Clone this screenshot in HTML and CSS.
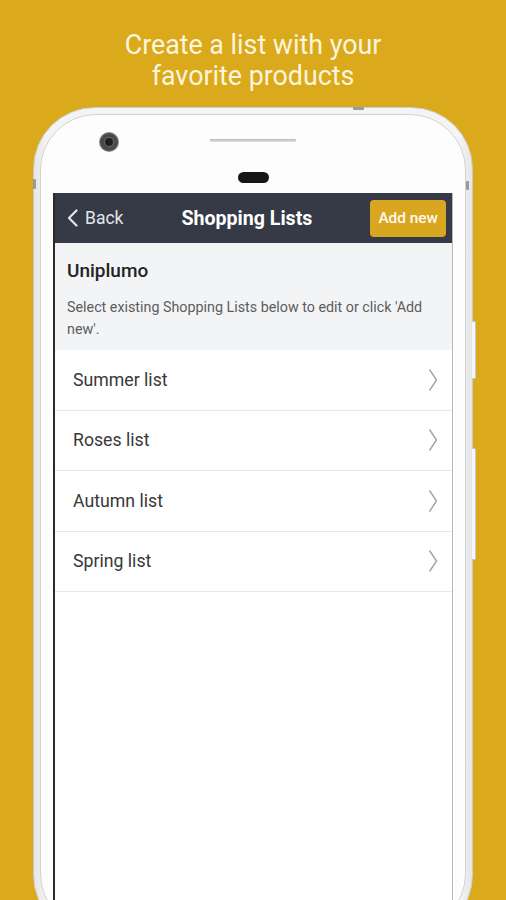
FILE: index.html
```html
<!DOCTYPE html>
<html>
<head>
<meta charset="utf-8">
<link rel="stylesheet" href="styles.css">
</head>
<body>
<div class="page">
  <h1 class="headline">Create a list with your<br>favorite products</h1>
  <div class="phone">
    <span class="mark mark-top"></span>
    <span class="mark mark-left"></span>
    <span class="mark mark-right"></span>
    <span class="side-btn side-btn-1"></span>
    <span class="side-btn side-btn-2"></span>
    <div class="phone-body">
      <div class="bezel">
        <div class="bezel-row">
          <span class="camera"><span class="lens"></span></span>
          <span class="speaker"></span>
        </div>
        <span class="earpiece"></span>
      </div>
      <div class="screen">
        <header class="navbar">
          <a class="back">
            <svg class="back-icon" width="11" height="18" viewBox="0 0 11 18"><polyline points="9.5,1.5 2,9 9.5,16.5" fill="none" stroke="#e3e6ea" stroke-width="2.2" stroke-linecap="round" stroke-linejoin="round"/></svg>
            <span>Back</span>
          </a>
          <span class="nav-title">Shopping Lists</span>
          <button class="add-btn">Add new</button>
        </header>
        <section class="intro">
          <h2 class="intro-title">Uniplumo</h2>
          <p class="intro-text">Select existing Shopping Lists below to edit or click 'Add new'.</p>
        </section>
        <ul class="lists">
          <li class="list-row"><span>Summer list</span><svg class="chev" width="10" height="24" viewBox="0 0 10 24"><polyline points="1.5,1.5 8.5,12 1.5,22.5" fill="none" stroke="#a3a3a3" stroke-width="1.4"/></svg></li>
          <li class="list-row"><span>Roses list</span><svg class="chev" width="10" height="24" viewBox="0 0 10 24"><polyline points="1.5,1.5 8.5,12 1.5,22.5" fill="none" stroke="#a3a3a3" stroke-width="1.4"/></svg></li>
          <li class="list-row"><span>Autumn list</span><svg class="chev" width="10" height="24" viewBox="0 0 10 24"><polyline points="1.5,1.5 8.5,12 1.5,22.5" fill="none" stroke="#a3a3a3" stroke-width="1.4"/></svg></li>
          <li class="list-row"><span>Spring list</span><svg class="chev" width="10" height="24" viewBox="0 0 10 24"><polyline points="1.5,1.5 8.5,12 1.5,22.5" fill="none" stroke="#a3a3a3" stroke-width="1.4"/></svg></li>
        </ul>
      </div>
    </div>
  </div>
</div>
</body>
</html>
```
FILE: styles.css
```css
html, body {
  margin: 0;
  padding: 0;
}
body {
  background: #daa91c;
  height: 900px;
  overflow: hidden;
  font-family: Roboto, "Liberation Sans", sans-serif;
}
.page {
  display: flex;
  flex-direction: column;
}
.headline {
  margin: 0;
  padding-top: 30px;
  text-align: center;
  font-weight: 400;
  font-size: 26.8px;
  line-height: 31px;
  color: #fcf5de;
}
.phone {
  position: relative;
  box-sizing: border-box;
  margin: 15px 0 0 33px;
  width: 440px;
  height: 830px;
  padding: 6px;
  border: 1px solid #cbcbcb;
  border-radius: 62px;
  background: linear-gradient(90deg, #e6e6e6, #f4f4f4 3%, #f4f4f4 97%, #e6e6e6);
}
.mark {
  position: absolute;
  background: #9a9a9a;
  border-radius: 1px;
}
.mark-top {
  top: -1px;
  left: 319px;
  width: 11px;
  height: 3px;
}
.mark-left {
  top: 71px;
  left: -1px;
  width: 3px;
  height: 10px;
}
.mark-right {
  top: 73px;
  right: 3px;
  width: 3px;
  height: 9px;
}
.side-btn {
  position: absolute;
  right: -4px;
  width: 3px;
  background: #f6f6f6;
  border: 1px solid #c9c9c9;
  border-left: none;
  border-radius: 0 2px 2px 0;
}
.side-btn-1 {
  top: 213px;
  height: 56px;
}
.side-btn-2 {
  top: 340px;
  height: 110px;
}
.phone-body {
  box-sizing: border-box;
  height: 100%;
  padding: 0 12px;
  border: 1px solid #d2d2d2;
  border-radius: 56px;
  background: #fdfdfd;
  display: flex;
  flex-direction: column;
}
.bezel {
  height: 78px;
  box-sizing: border-box;
  padding-top: 18px;
  display: flex;
  flex-direction: column;
}
.bezel-row {
  display: flex;
  align-items: center;
  height: 18px;
}
.camera {
  margin-left: 47px;
  width: 18px;
  height: 18px;
  border-radius: 50%;
  background: #4a4a4a;
  box-shadow: 0 0 0 1px #8a8a8a;
  display: flex;
  align-items: center;
  justify-content: center;
}
.lens {
  width: 8px;
  height: 8px;
  border-radius: 50%;
  background: #1e1e1e;
  box-shadow: 0 0 0 1px #6a6a6a;
}
.speaker {
  margin-left: 92px;
  margin-top: -4px;
  width: 86px;
  height: 3px;
  border-radius: 1px;
  background: linear-gradient(#b8b8b8, #e4e4e4);
}
.earpiece {
  align-self: center;
  margin-top: 21px;
  width: 31px;
  height: 11px;
  border-radius: 6px;
  background: #161616;
}
.screen {
  flex: 1;
  border-left: 2px solid #2a2a2a;
  border-right: 1px solid #b8b8b8;
  background: #fff;
  display: flex;
  flex-direction: column;
}
.navbar {
  height: 50px;
  box-sizing: border-box;
  background: #353a46;
  display: flex;
  align-items: center;
  justify-content: space-between;
  padding: 0 6px 0 12px;
}
.back {
  display: flex;
  align-items: center;
  gap: 7px;
  color: #e3e6ea;
  font-size: 17.5px;
}
.nav-title {
  color: #ffffff;
  font-weight: 700;
  font-size: 19.6px;
}
.add-btn {
  height: 37px;
  padding: 0 8px;
  border: none;
  border-radius: 4px;
  background: #d9a61f;
  color: #fffaf0;
  font-family: Roboto, "Liberation Sans", sans-serif;
  font-size: 15.4px;
  font-weight: 500;
}
.intro {
  background: #f3f4f6;
  padding: 16px 12px 10px 12px;
}
.intro-title {
  margin: 0;
  font-size: 19px;
  line-height: 24px;
  font-weight: 500;
  color: #232323;
}
.intro-text {
  margin: 13px 0 0 0;
  font-size: 14.3px;
  line-height: 22px;
  color: #5c5c5c;
}
.lists {
  list-style: none;
  margin: 0;
  padding: 0;
}
.list-row {
  box-sizing: border-box;
  height: 60.5px;
  border-bottom: 1.5px solid #e8e8e8;
  display: flex;
  align-items: center;
  justify-content: space-between;
  padding: 0 14px 0 18px;
  font-size: 17.7px;
  color: #383838;
}
```
